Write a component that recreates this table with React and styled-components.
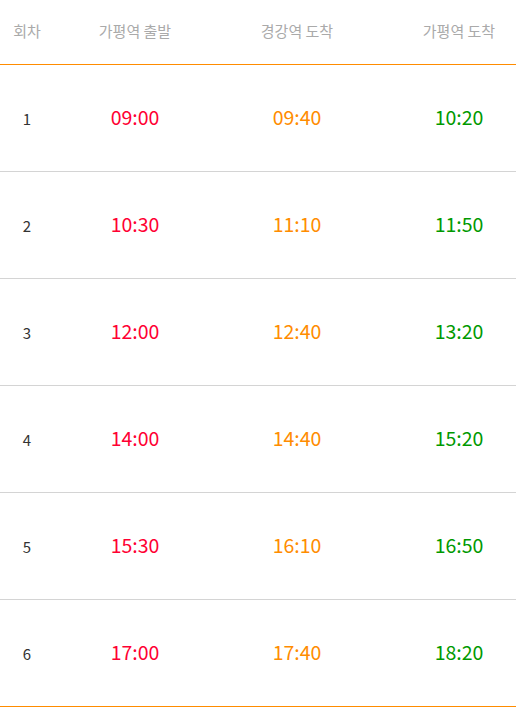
import styled, { createGlobalStyle } from "styled-components";

const GlobalStyle = createGlobalStyle`
  body {
    margin: 0;
    background: #fff;
    font-family: "Noto Sans CJK KR", "Noto Sans", sans-serif;
  }
`;

const rows = [
  ["1", "09:00", "09:40", "10:20"],
  ["2", "10:30", "11:10", "11:50"],
  ["3", "12:00", "12:40", "13:20"],
  ["4", "14:00", "14:40", "15:20"],
  ["5", "15:30", "16:10", "16:50"],
  ["6", "17:00", "17:40", "18:20"],
];

const Table = styled.div`
  width: 516px;
  border-bottom: 1px solid #ff8c00;
`;

const Row = styled.div`
  display: grid;
  grid-template-columns: 54px 162px 162px 138px;
  align-items: center;
  height: ${(p) => (p.$head ? "64px" : "106px")};
  border-bottom: 1px solid ${(p) => (p.$head ? "#ff8c00" : "#d4d4d4")};
  &:last-child {
    border-bottom: none;
  }
`;

const HeadCell = styled.div`
  text-align: center;
  font-size: 15px;
  color: #aaa;
  padding-left: ${(p) => (p.$last ? "24px" : "0")};
  padding-bottom: 4px;
`;

const Num = styled.div`
  text-align: center;
  font-size: 15px;
  color: #333;
`;

const Time = styled.div`
  text-align: center;
  font-size: 19.5px;
  color: ${(p) => p.$color};
  padding-left: ${(p) => (p.$last ? "24px" : "0")};
  padding-bottom: 4px;
`;

export default function App() {
  return (
    <>
      <GlobalStyle />
      <Table>
        <Row $head>
          <HeadCell>회차</HeadCell>
          <HeadCell>가평역 출발</HeadCell>
          <HeadCell>경강역 도착</HeadCell>
          <HeadCell $last>가평역 도착</HeadCell>
        </Row>
        {rows.map(([n, a, b, c]) => (
          <Row key={n}>
            <Num>{n}</Num>
            <Time $color="#ff0033">{a}</Time>
            <Time $color="#ff8c00">{b}</Time>
            <Time $color="#009900" $last>
              {c}
            </Time>
          </Row>
        ))}
      </Table>
    </>
  );
}
